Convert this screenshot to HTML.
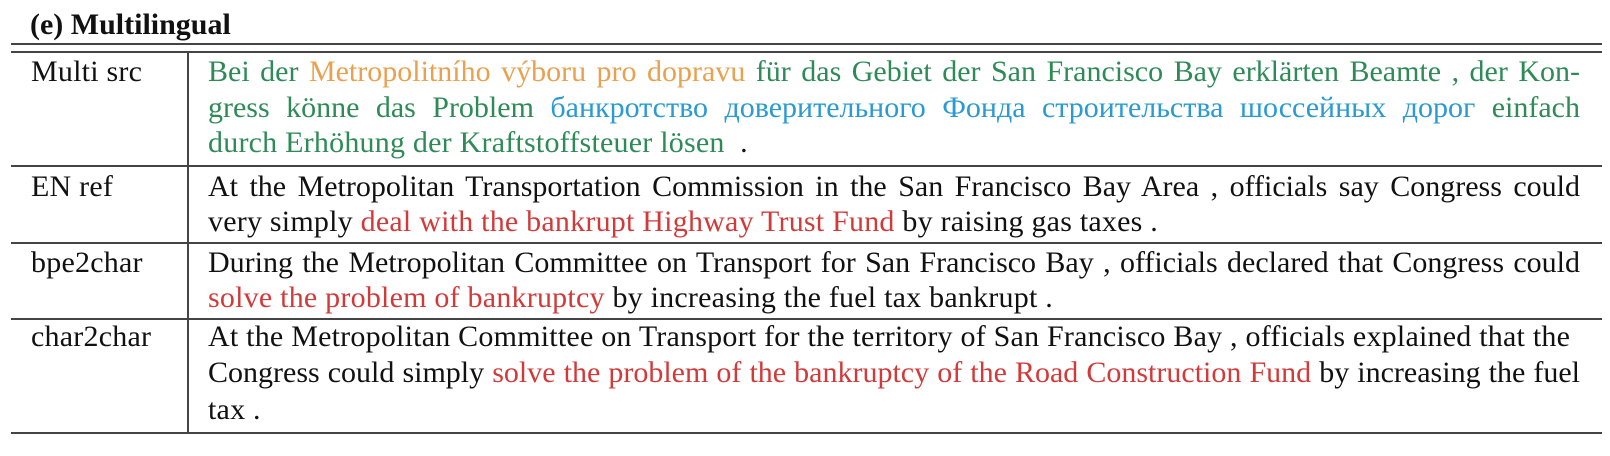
<!DOCTYPE html>
<html><head><meta charset="utf-8"><style>
body{margin:0;background:#fff;width:1610px;height:456px;position:relative;overflow:hidden;font-family:"Liberation Serif","DejaVu Serif",serif;color:#111}
.t{position:absolute;white-space:nowrap;font-size:30px;line-height:36px;font-family:"Liberation Serif",serif;letter-spacing:0.22px}
.j{width:1372px;text-align:justify;text-align-last:justify;white-space:normal;letter-spacing:0}
.h{position:absolute;left:11px;width:1591px;height:2px;background:#444}
.g{color:#2e8b57}.o{color:#e9a14f}.b{color:#2a9ad3}.r{color:#d23a3a}
</style></head><body>
<div class="t" style="left:30px;top:7px;font-weight:bold;letter-spacing:0">(e) Multilingual</div>
<div class="h" style="top:43px"></div>
<div class="h" style="top:51px"></div>
<div class="h" style="top:165px"></div>
<div class="h" style="top:242px"></div>
<div class="h" style="top:318px"></div>
<div class="h" style="top:432px"></div>
<div style="position:absolute;left:187px;top:52px;width:2px;height:381px;background:#444"></div>

<div class="t" style="left:31px;top:54px">Multi src</div>
<div class="t g j" style="left:208px;top:54px">Bei der <span class="o">Metropolitního výboru pro dopravu</span> für das Gebiet der San Francisco Bay erklärten Beamte , der Kon-</div>
<div class="t g j" style="left:208px;top:90px">gress könne das Problem <span class="b">банкротство доверительного Фонда строительства шоссейных дорог</span> einfach</div>
<div class="t g" style="left:208px;top:125px">durch Erhöhung der Kraftstoffsteuer lösen <span style="color:#111">&nbsp;.</span></div>

<div class="t" style="left:31px;top:169px">EN ref</div>
<div class="t j" style="left:208px;top:169px">At the Metropolitan Transportation Commission in the San Francisco Bay Area , officials say Congress could</div>
<div class="t" style="left:208px;top:204px">very simply <span class="r">deal with the bankrupt Highway Trust Fund</span> by raising gas taxes .</div>

<div class="t" style="left:31px;top:245px">bpe2char</div>
<div class="t j" style="left:208px;top:245px">During the Metropolitan Committee on Transport for San Francisco Bay , officials declared that Congress could</div>
<div class="t" style="left:208px;top:280px"><span class="r">solve the problem of bankruptcy</span> by increasing the fuel tax bankrupt .</div>

<div class="t" style="left:31px;top:319px">char2char</div>
<div class="t" style="left:208px;top:319px">At the Metropolitan Committee on Transport for the territory of San Francisco Bay , officials explained that the</div>
<div class="t j" style="left:208px;top:355px">Congress could simply <span class="r">solve the problem of the bankruptcy of the Road Construction Fund</span> by increasing the fuel</div>
<div class="t" style="left:208px;top:392px">tax .</div>
</body></html>
